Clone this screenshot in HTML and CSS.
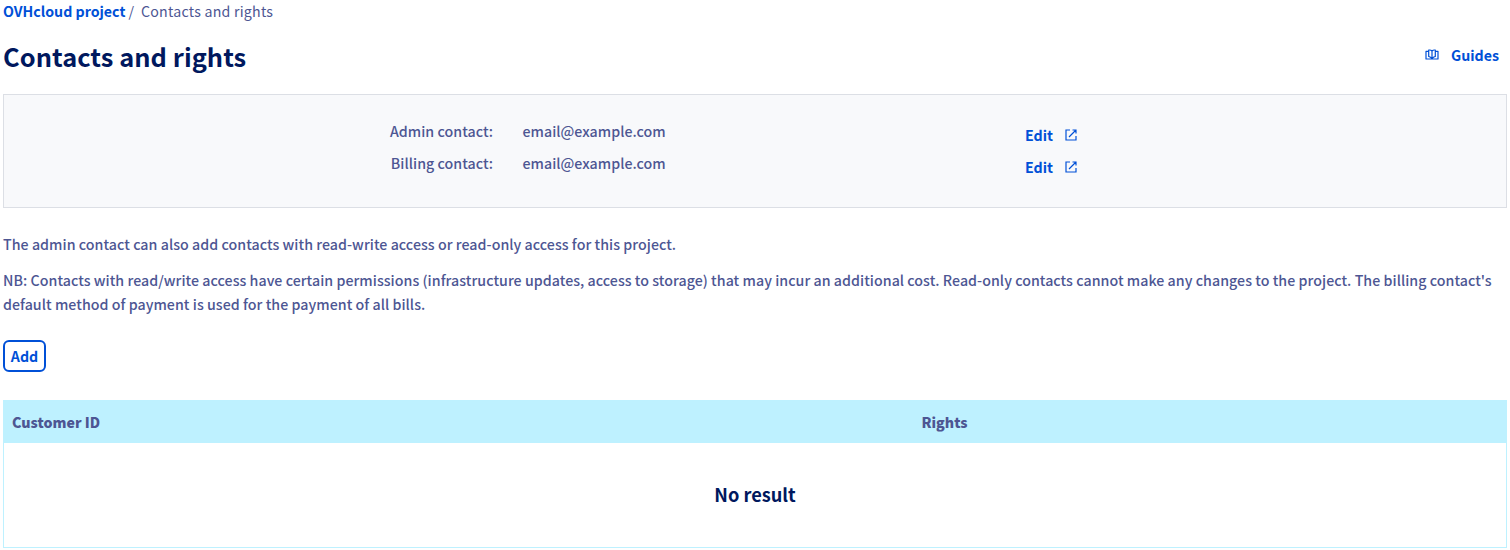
FILE: index.html
```html
<!DOCTYPE html>
<html lang="en">
<head>
<meta charset="utf-8">
<title>Contacts and rights</title>
<link rel="stylesheet" href="styles.css">
</head>
<body>
<main class="page">
  <nav class="breadcrumb"><a class="link" href="#">OVHcloud project</a><span class="sep">/</span><span class="crumb">Contacts and rights</span></nav>
  <header class="header">
    <h1 class="title">Contacts and rights</h1>
    <a class="guides link" href="#">
      <svg class="book" viewBox="0 0 14 12" fill="none" stroke="currentColor" stroke-width="1.2" stroke-linejoin="round"><path d="M3.700 2.400H1v7.600h12V2.400h-2.700M7 2v7.500M7 2C6 1 4.800.9 3.700 1.100v6.400C5 7.700 6.200 8.400 7 9.700c.8-1.300 2-2 3.300-2.200V1.100C9.200.9 8 1 7 2z"/></svg>
      <span class="guides-label">Guides</span>
    </a>
  </header>
  <section class="contacts">
    <div class="row"><span class="label">Admin contact:</span><span class="value">email@example.com</span><a class="edit link" href="#"><span>Edit</span><svg class="ext" viewBox="0 0 12 12" fill="none" stroke="currentColor" stroke-width="1.2"><path d="M5 1H1v10h10V7M7.500 1H11v3.500M11 1L4 8"/></svg></a></div>
    <div class="row"><span class="label">Billing contact:</span><span class="value">email@example.com</span><a class="edit link" href="#"><span>Edit</span><svg class="ext" viewBox="0 0 12 12" fill="none" stroke="currentColor" stroke-width="1.2"><path d="M5 1H1v10h10V7M7.500 1H11v3.500M11 1L4 8"/></svg></a></div>
  </section>
  <p class="text">The admin contact can also add contacts with read-write access or read-only access for this project.</p>
  <p class="text">NB: Contacts with read/write access have certain permissions (infrastructure updates, access to storage) that may incur an additional cost. Read-only contacts cannot make any changes to the project. The billing contact's<br>default method of payment is used for the payment of all bills.</p>
  <button class="add" type="button">Add</button>
  <section class="table">
    <div class="thead"><span>Customer ID</span><span>Rights</span></div>
    <div class="empty">No result</div>
  </section>
</main>
</body>
</html>
```
FILE: styles.css
```css
* { box-sizing: border-box; }
body {
  margin: 0;
  background: #fff;
  color: #4d5693;
  font: 500 14.2px/24px "Noto Sans CJK SC", "Noto Sans", sans-serif;
}
.page { padding: 0 3px; height: 550px; overflow: hidden; white-space: nowrap; }
.link { color: #0050d7; font-weight: 700; text-decoration: none; }
.breadcrumb { height: 24px; line-height: 22px; display: flex; }
.sep { margin: 0 7px 0 3px; }
.breadcrumb .sep, .crumb { font-weight: 400; }
.crumb { letter-spacing: 0.23px; }
.header { display: flex; justify-content: space-between; height: 70px; padding-top: 16px; }
.title { margin: 0; font-size: 25.4px; line-height: 32px; letter-spacing: 0.05px; color: #00185e; }
.guides { display: flex; align-items: flex-start; gap: 12px; padding: 3px 8px 0 0; }
.book { width: 14px; height: 12px; margin-top: 6px; }
.contacts { height: 114px; border: 1px solid #dcdfe5; background: #f8f9fb; padding-top: 24px; }
.row { display: grid; grid-template-columns: 489px 29.500px 502.500px auto; height: 32px; }
.label { text-align: right; grid-column: 1; letter-spacing: 0.04px; }
.value { grid-column: 3; letter-spacing: 0.03px; }
.edit { display: flex; gap: 12px; padding-top: 4px; }
.ext { width: 12px; height: 12px; margin-top: 6px; }
.text { margin: 0 0 12px; letter-spacing: 0.048px; }
.contacts + .text { margin-top: 24px; }
.add {
  display: block;
  width: 43px;
  height: 32px;
  margin-top: 24px;
  padding: 0;
  border: 2px solid #0050d7;
  border-radius: 6px;
  background: #fff;
  color: #0050d7;
  font: inherit;
  font-weight: 700;
}
.table { margin-top: 28px; height: 148px; border: 1px solid #bef1ff; }
.thead { display: grid; grid-template-columns: 909.500px 1fr; height: 42px; padding: 9px 8px 0; background: #bef1ff; font-size: 14.2px; font-weight: 900; }
.empty { height: 104px; line-height: 103px; text-align: center; font-size: 18.2px; font-weight: 700; color: #00185e; }
```
